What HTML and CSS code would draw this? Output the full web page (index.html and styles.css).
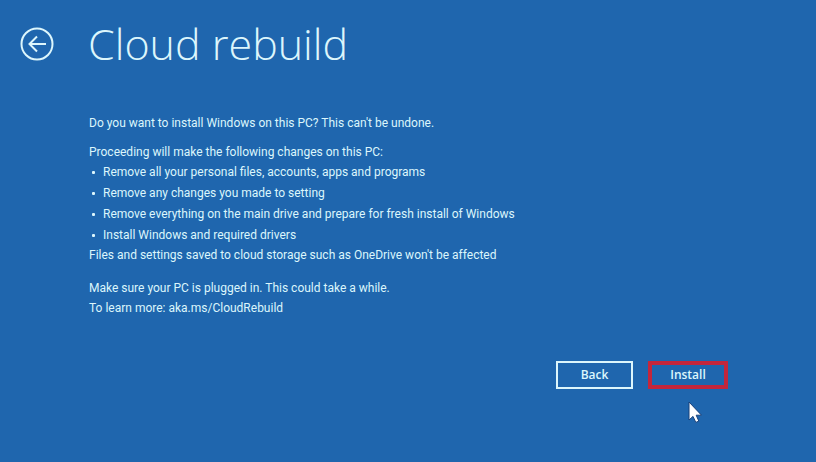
FILE: index.html
```html
<!DOCTYPE html>
<html lang="en">
<head>
    <meta charset="UTF-8">
    <meta name="viewport" content="width=device-width, initial-scale=1.0">
    <title>Cloud rebuild</title>
    <link rel="stylesheet" href="styles.css">
</head>
<body>
    <header class="header">
        <button class="back-arrow" type="button" aria-label="Go back">
            <svg viewBox="0 0 34 34" width="34" height="34" fill="none" stroke="currentColor" stroke-width="2">
                <circle cx="17" cy="17" r="15.5"/>
                <path d="M26 17H10M17 9.5L9.5 17l7.5 7.5"/>
            </svg>
        </button>
        <h1 class="title">Cloud rebuild</h1>
    </header>
    <main class="content">
        <p class="question">Do you want to install Windows on this PC? This can't be undone.</p>
        <div class="changes">
            <p>Proceeding will make the following changes on this PC:</p>
            <ul>
                <li>Remove all your personal files, accounts, apps and programs</li>
                <li>Remove any changes you made to setting</li>
                <li>Remove everything on the main drive and prepare for fresh install of Windows</li>
                <li>Install Windows and required drivers</li>
            </ul>
            <p>Files and settings saved to cloud storage such as OneDrive won't be affected</p>
        </div>
        <div class="notes">
            <p>Make sure your PC is plugged in. This could take a while.</p>
            <p>To learn more: aka.ms/CloudRebuild</p>
        </div>
    </main>
    <footer class="actions">
        <button class="btn" type="button">Back</button>
        <div class="install">
            <button class="btn btn-install" type="button">Install</button>
            <svg class="cursor" viewBox="0 0 14 22" width="14" height="22">
                <path d="M1 1v18l4-3.6 2.8 6 3-1.3L8.2 14.2h5.3z" fill="#fff" stroke="#17407a" stroke-width="1"/>
            </svg>
        </div>
    </footer>
</body>
</html>
```
FILE: styles.css
```css
*,
*::before,
*::after{
    box-sizing: border-box;
    margin: 0;
    padding: 0;
}
body{
    min-height: 100vh;
    padding: 16px 88px 0 20px;
    background: #1f66ae;
    color: #dcf6fc;
    font-family: "Open Sans", "Noto Sans", sans-serif;
    font-size: 12px;
    line-height: 20px;
}
button{
    font: inherit;
    color: inherit;
    background: none;
    border: none;
    cursor: pointer;
}
.header{
    display: flex;
    align-items: center;
    gap: 34px;
}
.back-arrow{
    width: 34px;
    height: 34px;
}
.back-arrow svg{
    display: block;
}
.title{
    font-size: 43px;
    font-weight: 300;
    line-height: 56px;
}
.content{
    margin-top: 41px;
    padding-left: 69px;
    font-family: Roboto, "Open Sans", sans-serif;
}
.changes{
    margin-top: 9px;
}
.notes{
    margin-top: 13px;
}
ul{
    display: grid;
    gap: 1px;
    list-style: none;
}
li{
    display: flex;
    align-items: center;
    gap: 8px;
}
li::before{
    content: "";
    width: 3px;
    height: 3px;
    margin-left: 3px;
    border-radius: 1px;
    background: currentColor;
}
.actions{
    display: flex;
    justify-content: flex-end;
    gap: 15px;
    margin-top: 43px;
}
.btn{
    width: 77px;
    height: 28px;
    border: 2px solid #dcf6fc;
    font-weight: 600;
    line-height: 20px;
}
.install{
    position: relative;
}
.btn-install{
    width: 80px;
    border: 4px solid #c4263c;
}
/* pointer rests just under the install button */
.cursor{
    position: absolute;
    top: 40px;
    left: 40px;
}
```
